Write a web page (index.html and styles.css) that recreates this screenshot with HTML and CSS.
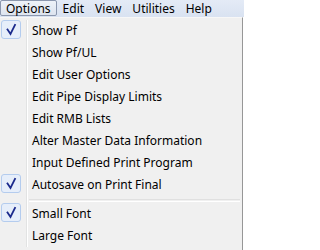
FILE: index.html
```html
<!DOCTYPE html>
<html>
<head>
<meta charset="utf-8">
<link rel="stylesheet" href="styles.css">
</head>
<body>
<div class="screen">
  <div class="menubar">
    <span class="top-item active">Options</span>
    <span class="top-item">Edit</span>
    <span class="top-item">View</span>
    <span class="top-item">Utilities</span>
    <span class="top-item">Help</span>
  </div>
  <div class="dropdown">
    <div class="item checked"><span class="gutter"><span class="check"><svg width="20" height="19" viewBox="0 0 20 19"><path d="M6.5 9.5 L9.5 14 L14 5" fill="none" stroke="#1b2a8c" stroke-width="1.8" stroke-linejoin="miter" stroke-linecap="square"/></svg></span></span><span class="label">Show Pf</span></div>
    <div class="item"><span class="gutter"></span><span class="label">Show Pf/UL</span></div>
    <div class="item"><span class="gutter"></span><span class="label">Edit User Options</span></div>
    <div class="item"><span class="gutter"></span><span class="label">Edit Pipe Display Limits</span></div>
    <div class="item"><span class="gutter"></span><span class="label">Edit RMB Lists</span></div>
    <div class="item"><span class="gutter"></span><span class="label">Alter Master Data Information</span></div>
    <div class="item"><span class="gutter"></span><span class="label">Input Defined Print Program</span></div>
    <div class="item checked"><span class="gutter"><span class="check"><svg width="20" height="19" viewBox="0 0 20 19"><path d="M6.5 9.5 L9.5 14 L14 5" fill="none" stroke="#1b2a8c" stroke-width="1.8" stroke-linejoin="miter" stroke-linecap="square"/></svg></span></span><span class="label">Autosave on Print Final</span></div>
    <div class="separator"><span class="gutter"></span><span class="sep-line"></span></div>
    <div class="item checked"><span class="gutter"><span class="check"><svg width="20" height="19" viewBox="0 0 20 19"><path d="M6.5 9.5 L9.5 14 L14 5" fill="none" stroke="#1b2a8c" stroke-width="1.8" stroke-linejoin="miter" stroke-linecap="square"/></svg></span></span><span class="label">Small Font</span></div>
    <div class="item"><span class="gutter"></span><span class="label">Large Font</span></div>
  </div>
</div>
</body>
</html>
```
FILE: styles.css
```css
html, body {
  margin: 0;
  padding: 0;
  background: #ffffff;
}
.screen {
  width: 244px;
  height: 250px;
  overflow: hidden;
  font-family: "Noto Sans", "Open Sans", sans-serif;
  font-size: 12px;
  color: #000;
  background: #fff;
}
.menubar {
  height: 17px;
  display: flex;
  align-items: flex-start;
  background: linear-gradient(#e4ebf6, #d9e2f1);
}
.top-item {
  height: 16px;
  line-height: 15px;
  padding: 0 4px 0 5px;
  border: 1px solid transparent;
  box-sizing: border-box;
}
.top-item.active {
  border-color: #8b97ae;
  border-radius: 2px;
  background: linear-gradient(#eef2f8, #dde4ef);
  padding-right: 5px;
}
.dropdown {
  width: 243px;
  height: 233px;
  box-sizing: border-box;
  background: #f0f0f0;
  border-right: 1px solid #979797;
  border-top: 1px solid #f7f7f7;
  padding-top: 2px;
  display: flex;
  flex-direction: column;
}
.item {
  height: 22px;
  display: flex;
  align-items: stretch;
}
.gutter {
  width: 26px;
  flex: none;
  border-right: 1px solid #e2e3e3;
  box-shadow: 1px 0 0 #ffffff;
  margin-right: 5px;
  position: relative;
}
.check {
  display: block;
  margin: 0 0 0 1px;
  width: 20px;
  height: 19px;
  box-sizing: border-box;
  border: 1px solid #b4ccee;
  border-radius: 3px;
  background: #e6eefa;
  position: relative;
}
.check svg {
  position: absolute;
  left: -1px;
  top: -1px;
}
.label {
  line-height: 22px;
  white-space: nowrap;
}
.separator {
  height: 7px;
  display: flex;
}
.sep-line {
  flex: 1;
  margin: 3px 2px 0 -3px;
  height: 1px;
  border-top: 1px solid #e0e0e0;
  border-bottom: 1px solid #ffffff;
}
```
